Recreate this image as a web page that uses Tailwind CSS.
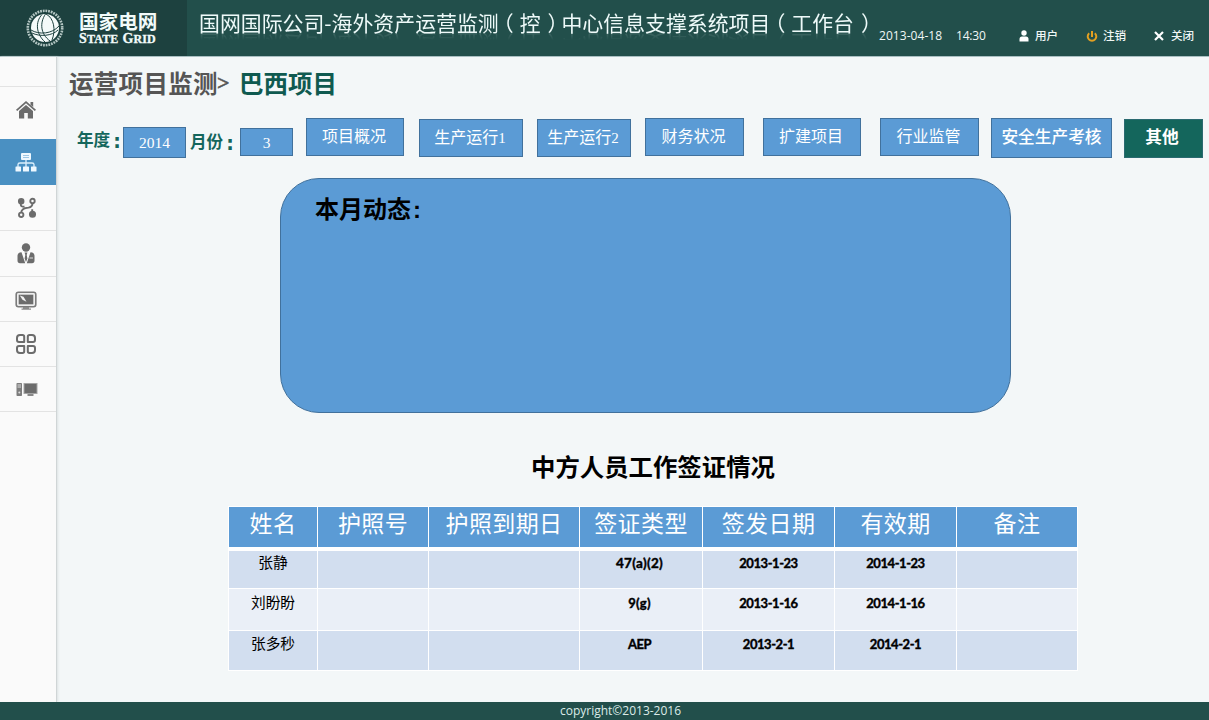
<!DOCTYPE html>
<html lang="zh-CN">
<head>
<meta charset="utf-8">
<title>国家电网 - 工作台</title>
<script src="https://cdn.jsdelivr.net/npm/@tailwindcss/browser@4"></script>
</head>
<body class="w-[1209px] h-[720px] overflow-hidden flex flex-col bg-[#f3f7f8] font-['Liberation_Sans','Noto_Sans_CJK_SC',sans-serif] whitespace-nowrap">
<header class="h-[57px] shrink-0 flex bg-[#224f4b] border-b border-[#a9bfc2] text-white">
  <div class="w-[187px] h-[56px] bg-[#1d413f] flex pl-[25px] shrink-0">
    <svg class="mt-[8px] shrink-0" width="40" height="40" viewBox="0 0 40 40">
      <circle cx="20" cy="20" r="17.2" fill="none" stroke="#b4c6c3" stroke-width="2.6" stroke-dasharray="1.8 .9"/>
      <circle cx="20" cy="20" r="14" fill="#f4faf9"/>
      <g fill="none" stroke="#1d413f" stroke-width="1">
        <path d="M17 6.500C10 14 11 26 20 34"/><path d="M20.500 6C14.500 15 15.500 26 25 33"/>
        <path d="M6 22C14 27 27 26 34 18"/><path d="M7 25C15 29 27 28 33 22"/>
        <path d="M21 6C29 10 31 22 27 32"/>
      </g>
    </svg>
    <div class="ml-[14px] flex flex-col">
      <div class="mt-[10px] h-[22px] text-[19.6px] leading-[22px] font-bold font-['Noto_Sans_CJK_SC',sans-serif] text-[#f2fbfa]">国家电网</div>
      <div class="h-[13px] flex items-baseline leading-[13px] font-bold font-['Liberation_Serif',serif] text-[12px] tracking-[0.15px] text-[#f2fbfa] [-webkit-text-stroke:0.3px_#f2fbfa]"><span class="text-[14px]">S</span><span>TATE</span><span class="text-[14px] ml-[4px]">G</span><span>RID</span></div>
    </div>
  </div>
  <h1 class="ml-[12px] mt-[10px] w-[680px] h-[24px] shrink-0 leading-[24px] text-[20.9px] font-['Noto_Sans_CJK_SC',sans-serif] text-[#eefaf9] [-webkit-box-reflect:below_-2px_linear-gradient(transparent_65%,rgba(255,255,255,0.16))]">国网国际公司-海外资产运营监测<span class="-ml-[6px] mr-[6px]">（</span>控<span class="ml-[7px] -mr-[7px]">）</span>中心信息支撑系统项目<span class="-ml-[6px] mr-[6px]">（</span>工作台<span class="ml-[7px] -mr-[7px]">）</span></h1>
  <div class="mt-[28px] h-[16px] flex items-center text-[12px] leading-[16px] font-['Open_Sans','Noto_Sans_CJK_SC',sans-serif] text-[#f0f7f6]">
    <span class="w-[77px] font-medium tracking-[0.05px]">2013-04-18</span><span class="w-[63px] font-medium tracking-[-0.2px]">14:30</span>
    <svg class="w-[10px] h-[12px] mr-[6px]" viewBox="0 0 10 12"><circle cx="5" cy="3" r="2.700" fill="#fff"/><path d="M.5 11.500V9Q.5 6.500 3 6.500H7Q9.500 6.500 9.500 9V11.500Z" fill="#fff"/></svg>
    <span class="w-[51px] text-[11.6px] font-medium">用户</span>
    <svg class="w-[12px] h-[13px] mr-[5px]" viewBox="0 0 12 13" fill="none" stroke="#e3a021" stroke-width="2"><path d="M3.200 3.200A4.300 4.300 0 1 0 8.800 3.200M6 1V7"/></svg>
    <span class="w-[51px] text-[11.6px] font-medium">注销</span>
    <svg class="w-[10px] h-[10px] mr-[7px]" viewBox="0 0 10 10" stroke="#fff" stroke-width="2.200"><path d="M1 1L9 9M9 1L1 9"/></svg>
    <span class="text-[11.6px] font-medium">关闭</span>
  </div>
</header>
<div class="flex h-[645px] shrink-0">
  <nav class="w-[57px] shrink-0 bg-[#fafafa] shadow-[inset_-1px_0_0_#d0d5d6,1px_0_2px_#dde2e3] flex flex-col">
    <div class="h-[30px] border-b border-[#e3e3e3] w-[56px]"></div>
    <a class="h-[52px] w-[56px] flex justify-center pt-[13px] pr-[4px]">
      <svg width="22" height="20" viewBox="0 0 22 20" fill="#6c6c6c"><path d="M11 1L21 9.800L19.800 11L11 3.300L2.200 11L1 9.800Z"/><path d="M15.500 2H18.200V7L15.500 4.700ZM11 5L18 11V18.500H12.800V13H9.200V18.500H4V11Z"/></svg>
    </a>
    <a class="h-[46px] w-[56px] bg-[#4a90c2] flex justify-center pt-[12px] pr-[4px]">
      <svg width="22" height="22" viewBox="0 0 22 22"><rect x="6" y="2" width="10" height="7" rx="1" fill="#eef8ff"/><path d="M8 4.500H14M8 6.500H14" stroke="#9cc6e5"/><path d="M11 9V16M3 16V13.500Q3 12 5 12H17Q19 12 19 13.500V16" fill="none" stroke="#dceffc" stroke-width="1.300"/><g fill="#eef8ff"><rect x=".5" y="15.500" width="5.500" height="5" rx=".6"/><rect x="8" y="15.500" width="6" height="5" rx=".6"/><rect x="16" y="15.500" width="5.500" height="5" rx=".6"/></g></svg>
    </a>
    <a class="h-[46px] w-[56px] border-b border-[#e3e3e3] flex justify-center pt-[12px] pr-[2px]">
      <svg width="20" height="22" viewBox="0 0 20 22" fill="none" stroke="#6c6c6c" stroke-width="1.900"><circle cx="4.200" cy="4.200" r="2.300" fill="#6c6c6c"/><circle cx="15.500" cy="4" r="2.200"/><circle cx="4.200" cy="17.800" r="2.200"/><circle cx="15.500" cy="17.300" r="2.600" fill="#6c6c6c"/><path d="M3.800 6V8Q4 9.800 7.500 9.800M15.500 6.200Q15.500 9.800 11.500 10.600Q4.500 11.200 4.200 15.600M15.200 15V12.200"/></svg>
    </a>
    <a class="h-[46px] w-[56px] border-b border-[#e3e3e3] flex justify-center pt-[12px] pr-[4px]">
      <svg width="20" height="22" viewBox="0 0 20 22" fill="#6c6c6c"><circle cx="10" cy="4.500" r="4.200"/><path d="M5.500 9.200L9.200 20.200H4Q1.500 20.200 1.500 17.500V13Q1.500 9.200 5.500 9.200ZM14.500 9.200L10.800 20.200H16Q18.500 20.200 18.500 17.500V13Q18.500 9.200 14.500 9.200Z"/><path d="M8.600 9.600H11.400L10.700 12L11.400 15.500L10 19L8.600 15.500L9.300 12Z"/><path d="M13.500 15H17" stroke="#ddd"/></svg>
    </a>
    <a class="h-[45px] w-[56px] border-b border-[#e3e3e3] flex justify-center pt-[14px] pr-[4px]">
      <svg width="22" height="20" viewBox="0 0 22 20"><rect x="1.200" y="1.200" width="19.600" height="14.600" rx="2.200" fill="#eee" stroke="#7b7b7b" stroke-width="1.600"/><rect x="3.700" y="3.700" width="14.600" height="9.600" fill="#6c6c6c"/><path d="M4.800 4.500L8.500 5.800L11.500 10.800L7.500 8.800Z" fill="#f2f2f2"/><path d="M8 16H14V17.500H16V18.800H6.500V17.500H8Z" fill="#8a8a8a"/></svg>
    </a>
    <a class="h-[45px] w-[56px] border-b border-[#e3e3e3] flex justify-center pt-[11px] pr-[4px]">
      <svg width="22" height="22" viewBox="0 0 22 22" fill="none" stroke="#6c6c6c" stroke-width="2" stroke-linejoin="round"><path d="M5 2H7.500Q9.200 2 9.200 3.700V9H4Q2 9 2 7V5Q2 2 5 2ZM14.500 2H17Q20 2 20 5V7Q20 9 18 9H12.800V3.700Q12.800 2 14.500 2ZM4 13H9.200V18.300Q9.200 20 7.500 20H5Q2 20 2 17V15Q2 13 4 13ZM12.800 13H18Q20 13 20 15V17Q20 20 17 20H14.500Q12.800 20 12.800 18.300Z"/></svg>
    </a>
    <a class="h-[45px] w-[56px] border-b border-[#e3e3e3] flex justify-center pt-[15px] pr-[2px]">
      <svg width="22" height="16" viewBox="0 0 22 16"><rect x=".5" y="1" width="5.500" height="13" rx=".8" fill="#7d7d7d"/><path d="M1.500 3H5M1.500 5H5" stroke="#ddd"/><circle cx="3.300" cy="10.500" r="1" fill="#ddd"/><rect x="8" y="1.500" width="13" height="10" fill="#6c6c6c" stroke="#a5a5a5"/><path d="M11.500 12H17.500V14H11.500Z" fill="#888"/></svg>
    </a>
  </nav>
  <main class="flex-1 flex flex-col">
    <div class="h-[61px] pl-[12px] pt-[11px] flex text-[24.500px] leading-[30px] font-bold">
      <span class="w-[148px] text-[#555] tracking-[0.3px] font-['Noto_Sans_CJK_SC',sans-serif]">运营项目监测</span><span class="w-[22px] text-[#555] text-[22px] font-['Liberation_Serif',serif] [-webkit-text-stroke:0.5px_#555]">&gt;</span><span class="text-[#0f5a50] font-['Noto_Sans_CJK_SC',sans-serif]">巴西项目</span>
    </div>
    <div class="h-[60px] pl-[20px] flex items-start text-white text-[16px]">
      <span class="w-[46px] mt-[13px] leading-[20px] flex font-bold text-[#14665c] text-[16.600px]">年度<span class="ml-[3px] text-[19px] font-['DejaVu_Sans',sans-serif]">:</span></span>
      <div class="w-[63px] h-[31px] mt-[9px] bg-[#5b9bd5] border border-[#41719c] text-center text-[15.500px] leading-[29px] font-['Liberation_Serif',serif]">2014</div>
      <span class="ml-[4px] w-[50px] mt-[15px] leading-[20px] flex font-bold text-[#14665c] text-[16.600px]">月份<span class="ml-[3px] text-[19px] font-['DejaVu_Sans',sans-serif]">:</span></span>
      <div class="w-[53px] h-[28px] mt-[10px] bg-[#5b9bd5] border border-[#41719c] text-center text-[15.500px] leading-[27px] font-['Liberation_Serif',serif]">3</div>
      <div class="ml-[13px] w-[98px] h-[38px] bg-[#5b9bd5] border border-[#41719c] text-center leading-[36px] pr-[2px]">项目概况</div>
      <div class="ml-[15px] w-[104px] h-[38px] mt-[1px] bg-[#5b9bd5] border border-[#41719c] text-center leading-[36px] pr-[2px]">生产运行<span class="text-[15px] font-['Liberation_Serif',serif]">1</span></div>
      <div class="ml-[14px] w-[94px] h-[38px] mt-[1px] bg-[#5b9bd5] border border-[#41719c] text-center leading-[36px] pr-[2px]">生产运行<span class="text-[15px] font-['Liberation_Serif',serif]">2</span></div>
      <div class="ml-[14px] w-[99px] h-[38px] bg-[#5b9bd5] border border-[#41719c] text-center leading-[36px] pr-[2px]">财务状况</div>
      <div class="ml-[19px] w-[98px] h-[38px] bg-[#5b9bd5] border border-[#41719c] text-center leading-[36px] pr-[2px]">扩建项目</div>
      <div class="ml-[19px] w-[99px] h-[38px] bg-[#5b9bd5] border border-[#41719c] text-center leading-[36px] pr-[2px]">行业监管</div>
      <div class="ml-[12px] w-[121px] h-[40px] bg-[#5b9bd5] border border-[#41719c] text-center leading-[37px] text-[16.700px] font-medium">安全生产考核</div>
      <div class="ml-[12px] w-[79px] h-[39px] mt-[1px] bg-[#14665c] border border-[#2a6a70] text-center leading-[36px] pr-[3px] text-[16.700px] font-bold">其他</div>
    </div>
    <section class="ml-[223px] w-[731px] h-[235px] shrink-0 rounded-[39px] bg-[#5b9bd5] border border-[#41719c] pl-[34px] pt-[15px] text-[24px] leading-[32px] font-bold text-black">本月动态<span class="ml-[2px]">:</span></section>
    <h2 class="mt-[38px] ml-[474px] h-[34px] leading-[34px] text-[24.400px] font-bold text-black">中方人员工作签证情况</h2>
    <table class="mt-[21px] ml-[171px] w-[850px] table-fixed border-separate border-spacing-0 text-center text-black bg-white">
      <colgroup><col class="w-[90px]"><col class="w-[111px]"><col class="w-[151px]"><col class="w-[123px]"><col class="w-[132px]"><col class="w-[122px]"><col class="w-[121px]"></colgroup>
      <thead><tr class="h-[45px] text-[23px] leading-[34px] text-white align-top [&>th]:bg-[#5b9bd5] [&>th]:font-normal [&>th]:p-0 [&>th]:border-r [&>th]:border-t [&>th]:border-white [&>th]:border-b-4 [&>th]:tracking-[0.400px]">
        <th class="border-l">姓名</th><th>护照号</th><th>护照到期日</th><th>签证类型</th><th>签发日期</th><th>有效期</th><th>备注</th></tr></thead>
      <tbody class="align-top text-[13px] font-bold font-['Lato','Noto_Sans_CJK_SC',sans-serif] tracking-[-0.450px] [&_td]:p-0 [&_td]:border-r [&_td]:border-b [&_td]:border-white [-webkit-text-stroke:0.4px_#000]">
        <tr class="h-[38px] leading-[24px] bg-[#d2deef]"><td class="border-l text-[14.700px] leading-[22px] font-normal tracking-normal [-webkit-text-stroke:0]">张静</td><td></td><td></td><td><span class="mr-[3px] text-[13.500px] tracking-[0.300px]">47(a)(2)</span></td><td>2013-1-23</td><td>2014-1-23</td><td></td></tr>
        <tr class="h-[42px] leading-[29px] bg-[#eaeff7]"><td class="border-l text-[14.700px] leading-[27px] font-normal tracking-normal [-webkit-text-stroke:0]">刘盼盼</td><td></td><td></td><td><span class="mr-[3px] tracking-[0.300px]">9(g)</span></td><td>2013-1-16</td><td>2014-1-16</td><td></td></tr>
        <tr class="h-[40px] leading-[26px] bg-[#d2deef]"><td class="border-l text-[14.700px] leading-[24px] font-normal tracking-normal [-webkit-text-stroke:0]">张多秒</td><td></td><td></td><td><span class="mr-[3px]">AEP</span></td><td>2013-2-1</td><td>2014-2-1</td><td></td></tr>
      </tbody>
    </table>
  </main>
</div>
<footer class="h-[18px] shrink-0 bg-[#224f4b] text-center pl-[32px] text-[12px] leading-[17px] text-[#dcebe8] font-['Open_Sans',sans-serif]">copyright©2013-2016</footer>
</body>
</html>
